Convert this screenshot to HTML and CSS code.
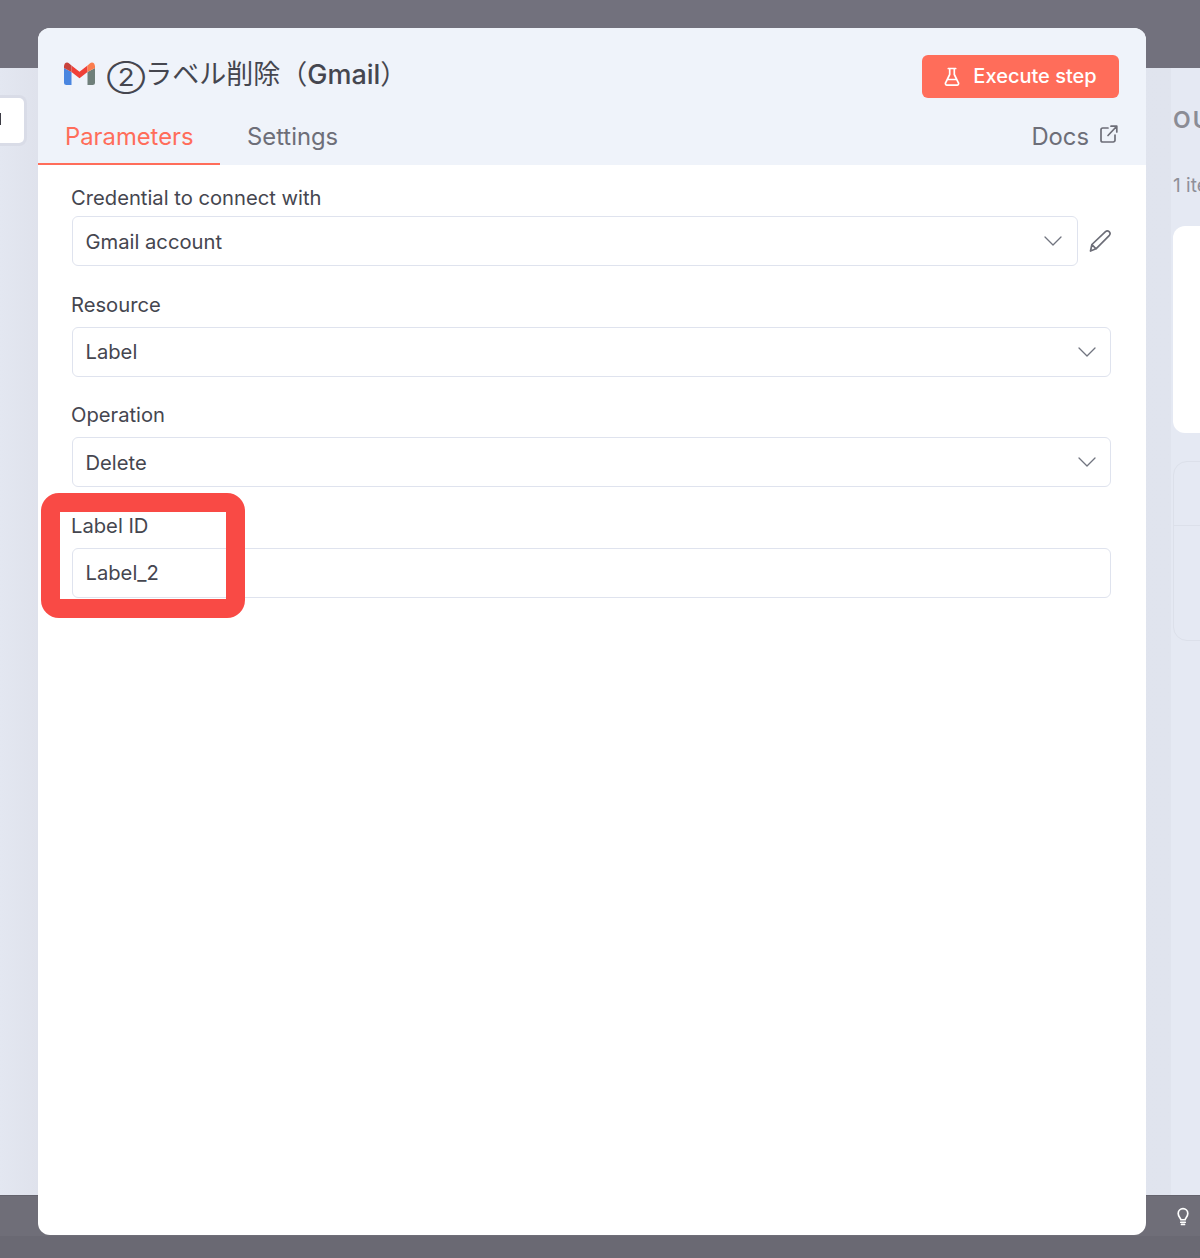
FILE: index.html
```html
<!DOCTYPE html>
<html lang="ja">
<head>
<meta charset="utf-8">
<title>ラベル削除（Gmail）</title>
<link rel="stylesheet" href="styles.css">
</head>
<body>
<div class="app">
  <div class="topbar"></div>
  <div class="main">
    <div class="left-col">
      <div class="node-card"><span class="node-cut"></span></div>
    </div>
    <div class="middle-col"></div>
    <div class="right-col">
      <div class="out-title">OUTPUT</div>
      <div class="out-count">1 item</div>
      <div class="out-card"></div>
      <div class="out-table">
        <div class="out-table-head"></div>
      </div>
    </div>
  </div>
  <div class="footer">
    <svg class="bulb" viewBox="0 0 18 22" width="16" height="20" fill="none" stroke="#fff" stroke-width="1.9" stroke-linecap="round" stroke-linejoin="round"><path d="M6.6 15.2c0-1.9-3-3.4-3-7.1a5.4 5.4 0 0 1 10.8 0c0 3.7-3 5.2-3 7.1z"/><path d="M6.5 18h5M7.300 20.500h3.400"/></svg>
  </div>

  <section class="modal">
    <header class="modal-head">
      <div class="title-row">
        <div class="title">
          <svg class="gmail" viewBox="0 0 31 23" width="31" height="23">
            <path fill="#4a86e0" d="M0 6V20.500A2.500 2.500 0 0 0 2.500 23H7.500V10z"/>
            <path fill="#6f7f7a" d="M31 6V20.500A2.500 2.500 0 0 1 28.500 23H23.500V10z"/>
            <path fill="#f04038" d="M7.500 3.500 15.500 9.800 23.500 3.500V10L15.500 16.200 7.500 10z"/>
            <path fill="#c8423c" d="M7.500 10V3.500L5.200 1.400C2.800-.8 0 1 0 4.500V6z"/>
            <path fill="#fb7d4e" d="M23.500 10V3.500L25.800 1.400C28.200-.8 31 1 31 4.500V6z"/>
          </svg>
          <h1 class="title-text"><span class="title-num">②</span>ラベル削除（<span class="title-en">Gmail</span>）</h1>
        </div>
        <button class="run-btn">
          <svg viewBox="0 0 16 20" width="16" height="20" fill="none" stroke="#fff" stroke-width="1.7" stroke-linecap="round" stroke-linejoin="round"><path d="M4.300 1.500h7.400M5.700 1.500v6L1.600 15.800a1.600 1.600 0 0 0 1.400 2.400h10a1.600 1.600 0 0 0 1.400-2.400L10.300 7.500v-6M3.700 12.500h8.600"/></svg>
          <span>Execute step</span>
        </button>
      </div>
      <nav class="tabs">
        <a class="tab tab-active">Parameters</a>
        <a class="tab">Settings</a>
        <a class="docs">Docs
          <svg viewBox="0 0 18 18" width="18" height="18" fill="none" stroke="#6d6e78" stroke-width="1.700" stroke-linecap="round" stroke-linejoin="round"><path d="M8 3H2.800A1.800 1.800 0 0 0 1 4.800v10.400A1.800 1.800 0 0 0 2.800 17h10.400a1.800 1.800 0 0 0 1.800-1.800V10"/><path d="M8 10.500 16.500 1.500M11 1.200h5.800V7"/></svg>
        </a>
      </nav>
    </header>
    <div class="modal-body">
      <div class="field field-first">
        <label class="field-label">Credential to connect with</label>
        <div class="field-row">
          <div class="select">
            <span>Gmail account</span>
            <svg class="chev" viewBox="0 0 18 10" width="18" height="10" fill="none" stroke="#71747f" stroke-width="1.300" stroke-linecap="round" stroke-linejoin="round"><path d="M1 1l8 8 8-8"/></svg>
          </div>
          <svg class="pencil" viewBox="0 0 24 24" width="24" height="24" fill="none" stroke="#6d6e78" stroke-width="1.700" stroke-linecap="round" stroke-linejoin="round"><path d="M2.500 22 3.900 15.500 17.500 2.600a2.700 2.700 0 0 1 3.900 3.700L8 19.800zM3.900 15.500 8 19.800"/></svg>
        </div>
      </div>
      <div class="field">
        <label class="field-label">Resource</label>
        <div class="select">
          <span>Label</span>
          <svg class="chev" viewBox="0 0 18 10" width="18" height="10" fill="none" stroke="#71747f" stroke-width="1.300" stroke-linecap="round" stroke-linejoin="round"><path d="M1 1l8 8 8-8"/></svg>
        </div>
      </div>
      <div class="field">
        <label class="field-label">Operation</label>
        <div class="select">
          <span>Delete</span>
          <svg class="chev" viewBox="0 0 18 10" width="18" height="10" fill="none" stroke="#71747f" stroke-width="1.300" stroke-linecap="round" stroke-linejoin="round"><path d="M1 1l8 8 8-8"/></svg>
        </div>
      </div>
      <div class="field">
        <label class="field-label">Label ID</label>
        <div class="select"><span>Label_2</span></div>
      </div>
    </div>
  </section>
  <div class="highlight"></div>
</div>
</body>
</html>
```
FILE: styles.css
```css
* { box-sizing: border-box; }
html, body { margin: 0; padding: 0; }
body { font-family: Inter, "Noto Sans CJK JP", sans-serif; color: #45464f; background: #e4e8f2; }
.app { position: relative; width: 1200px; height: 1258px; overflow: hidden; display: flex; flex-direction: column; }
.topbar { height: 68px; background: #72717d; flex: none; }
.main { flex: 1; display: flex; background: #e5e9f3; min-height: 0; }
.footer { height: 63px; flex: none; background: linear-gradient(#6f6e78 40px, #6a6973 40px); border-top: 1px solid #64636d; display: flex; justify-content: flex-end; padding: 10px 9px 0 0; }
.bulb { display: block; }

.left-col { width: 38px; flex: none; background: linear-gradient(90deg, #e3e7f1, #dfe2ec); padding-top: 27px; overflow: hidden; }
.node-card { width: 28px; height: 51px; margin-left: -1px; background: #fff; border: 3px solid #d9dce7; border-left: 0; border-radius: 0 8px 8px 0; padding-top: 15px; }
.node-cut { display: block; width: 2px; height: 12px; background: #3c3b44; }
.middle-col { flex: 1; background: linear-gradient(90deg, #dbdfea, #e0e4ee); }
.right-col { width: 29px; flex: none; padding: 39px 0 0 2px; overflow: hidden; }
.out-title { width: 120px; font-size: 23px; line-height: 26px; font-weight: 600; letter-spacing: 2px; color: #8b8c95; }
.out-count { width: 120px; margin-top: 41px; font-size: 19px; line-height: 24px; color: #8f9099; }
.out-card { width: 120px; height: 207px; margin-top: 28px; background: #fff; border-radius: 12px; }
.out-table { width: 120px; height: 180px; margin-top: 28px; border: 1.500px solid #dce0ea; border-radius: 14px; }
.out-table-head { height: 64px; border-bottom: 1.500px solid #dce0ea; }

.modal { position: absolute; left: 38px; top: 28px; width: 1108px; height: 1207px; background: #fff; border-radius: 12px; overflow: hidden; display: flex; flex-direction: column; }
.modal-head { height: 137px; flex: none; background: #eff3fa; padding: 27px 27px 0 0; display: flex; flex-direction: column; }
.title-row { display: flex; justify-content: space-between; align-items: flex-start; height: 43px; flex: none; }
.title { display: flex; align-items: center; height: 40px; padding-left: 26px; }
.gmail { display: block; flex: none; margin-right: 12px; margin-top: -4px; }
.title-text { margin: 0; font-size: 27px; line-height: 40px; font-weight: 400; color: #45464f; white-space: nowrap; }
.title-en { font-weight: 500; }
.title-num { display: inline-block; font-size: 27.500px; line-height: 30px; vertical-align: -3px; transform: scaleY(.88); }
.run-btn { width: 197px; height: 43px; border: 0; border-radius: 6px; background: #ff6d5a; color: #fff; font: 500 20px/43px Inter, sans-serif; display: flex; align-items: center; justify-content: center; gap: 13px; padding: 0; }
.tabs { display: flex; align-items: flex-start; flex: 1; }
.tab { font-size: 23.800px; line-height: 30px; padding: 24px 28px 0 27px; height: 67px; color: #6d6e78; font-weight: 400; }
.tab-active { color: #ff6d5a; border-bottom: 2.500px solid #ff6d5a; width: 182px; }
.docs { margin-left: auto; margin-right: 1px; font-size: 23.800px; line-height: 30px; padding-top: 24px; color: #6d6e78; display: flex; align-items: flex-start; gap: 11px; }
.docs svg { margin-top: 3px; }

.modal-body { flex: 1; padding: 18px 35px 0 34px; display: flex; flex-direction: column; }
.field { height: 110.670px; flex: none; }
.field-label { display: block; font-size: 20.200px; line-height: 22px; height: 33px; margin-left: -1px; color: #45464f; }
.field-first .field-label { padding-top: 4px; }
.field-row { display: flex; align-items: center; gap: 10px; }
.field-row .select { flex: 1; padding-right: 15px; }
.select { height: 50px; background: #fff; border: 1.500px solid #dfe3ee; border-radius: 6px; display: flex; align-items: center; justify-content: space-between; padding: 0 14px 0 12.500px; font-size: 20.200px; color: #45464f; }
.pencil { flex: none; margin-right: -1px; }
.highlight { position: absolute; left: 41px; top: 493px; width: 204px; height: 125px; border: 19px solid #f94a45; border-radius: 18px; }
```
